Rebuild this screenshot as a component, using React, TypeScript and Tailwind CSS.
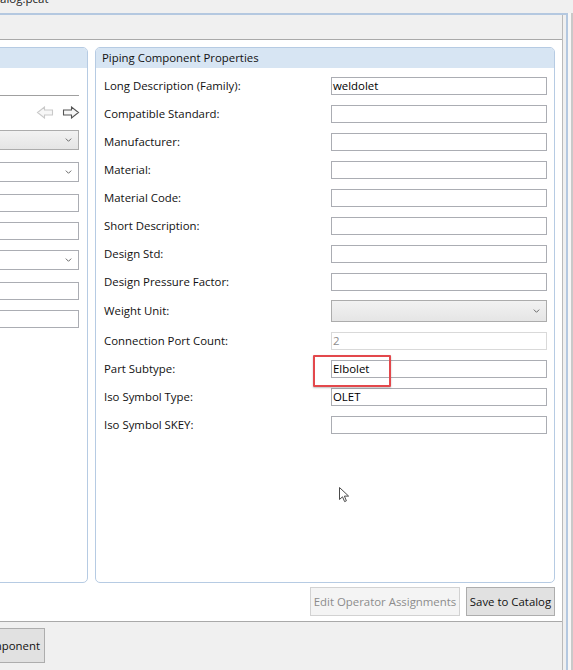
import React from 'react';

const rows: { label: string; kind: 'text' | 'select' | 'disabled'; value?: string; h: string }[] = [
  { label: 'Long Description (Family):', kind: 'text', value: 'weldolet', h: 'h-[28px]' },
  { label: 'Compatible Standard:', kind: 'text', h: 'h-[28px]' },
  { label: 'Manufacturer:', kind: 'text', h: 'h-[28px]' },
  { label: 'Material:', kind: 'text', h: 'h-[28px]' },
  { label: 'Material Code:', kind: 'text', h: 'h-[28px]' },
  { label: 'Short Description:', kind: 'text', h: 'h-[28px]' },
  { label: 'Design Std:', kind: 'text', h: 'h-[28px]' },
  { label: 'Design Pressure Factor:', kind: 'text', h: 'h-[28px]' },
  { label: 'Weight Unit:', kind: 'select', h: 'h-[30px]' },
  { label: 'Connection Port Count:', kind: 'disabled', value: '2', h: 'h-[29px]' },
  { label: 'Part Subtype:', kind: 'text', value: 'Elbolet', h: 'h-[28px]' },
  { label: 'Iso Symbol Type:', kind: 'text', value: 'OLET', h: 'h-[28px]' },
  { label: 'Iso Symbol SKEY:', kind: 'text', h: 'h-[28px]' },
];

function Chevron() {
  return (
    <svg width="7" height="4" viewBox="0 0 7 4" className="shrink-0">
      <path d="M0.8 0.6 L3.5 3.3 L6.2 0.6" fill="none" stroke="#6a6a6a" strokeWidth="1" />
    </svg>
  );
}

function BlockArrow({ dir, color }: { dir: 'left' | 'right'; color: string }) {
  return (
    <svg width="18" height="13" viewBox="0 0 18 13" className={dir === 'left' ? '-scale-x-100' : ''}>
      <path d="M1.5 4 H9.5 V1 L16.5 6.5 L9.5 12 V9 H1.5 Z" fill="#f7f7f7" stroke={color} strokeWidth="1.1" strokeLinejoin="miter" />
    </svg>
  );
}

function Field({ kind, value }: { kind: 'text' | 'select' | 'disabled'; value?: string }) {
  if (kind === 'select') {
    return (
      <div className="w-[216px] h-[22px] border border-[#acacac] bg-gradient-to-b from-[#f2f2f2] to-[#e5e5e5] flex items-center justify-end pr-[6px]">
        <Chevron />
      </div>
    );
  }
  if (kind === 'disabled') {
    return (
      <div className="w-[216px] h-[18px] border border-[#d9d9d9] bg-white flex items-center pl-[1px] text-[#8d8d8d]">
        {value}
      </div>
    );
  }
  return (
    <div className="w-[216px] h-[18px] border border-[#abadb3] bg-white flex items-center pl-[1px] text-[#000]">
      {value}
    </div>
  );
}

export default function App() {
  return (
    <div className="relative w-[573px] h-[670px] overflow-hidden bg-[#f0f0f0] text-[11.4px] leading-none text-[#111] font-['Segoe_UI','Open_Sans',sans-serif]">
      {/* window title, scrolled off the top */}
      <div className="h-[13px] overflow-hidden">
        <div className="-mt-[7px] text-[11.5px] leading-[12px] text-[#222]">alog.pcat</div>
      </div>

      <div className="flex h-[657px]">
        <div className="w-[568px] border-t-2 border-r-2 border-[#b4c8e0] flex">
          <div className="w-[563px] border-r border-[#bababa] flex flex-col">
            <div className="h-[25px] shrink-0 border-b border-[#a9a9a9] bg-[#f0f0f0]" />

            {/* main white area */}
            <div className="h-[582px] shrink-0 bg-white border-b border-[#a9a9a9] pt-[7px] flex flex-col">
              <div className="flex gap-[7px] h-[536px]">
                {/* left panel (cut off) */}
                <div className="-ml-[12px] w-[100px] border border-[#b6cbe3] rounded-[5px] overflow-hidden flex flex-col">
                  <div className="h-[20px] bg-[#d7e5f3] shrink-0" />
                  <div className="px-[8px] flex flex-col">
                    <div className="mt-[27px] h-px bg-[#a0a0a0]" />
                    <div className="mt-[10px] h-[13px] flex justify-end gap-[8px] -mr-[1px]">
                      <BlockArrow dir="left" color="#c9c9c9" />
                      <BlockArrow dir="right" color="#555555" />
                    </div>
                    <div className="mt-[11px] h-[20px] border border-[#acacac] bg-gradient-to-b from-[#f2f2f2] to-[#e5e5e5] flex items-center justify-end pr-[6px]">
                      <Chevron />
                    </div>
                    <div className="mt-[12px] h-[20px] border border-[#abadb3] bg-white flex items-center justify-end pr-[6px]">
                      <Chevron />
                    </div>
                    <div className="mt-[12px] h-[18px] border border-[#abadb3] bg-white" />
                    <div className="mt-[10px] h-[18px] border border-[#abadb3] bg-white" />
                    <div className="mt-[10px] h-[20px] border border-[#abadb3] bg-white flex items-center justify-end pr-[6px]">
                      <Chevron />
                    </div>
                    <div className="mt-[12px] h-[18px] border border-[#abadb3] bg-white" />
                    <div className="mt-[10px] h-[18px] border border-[#abadb3] bg-white" />
                  </div>
                </div>

                {/* right panel */}
                <div className="w-[460px] border border-[#b6cbe3] rounded-[5px] overflow-hidden flex flex-col">
                  <div className="h-[20px] bg-[#d7e5f3] shrink-0 flex items-center px-[6px] text-[#111]">
                    Piping Component Properties
                  </div>
                  <div className="pt-[4px] pl-[8px] pr-[7px] flex flex-col">
                    {rows.map(r => (
                      <div key={r.label} className={`${r.h} flex items-center justify-between`}>
                        <span>{r.label}</span>
                        <Field kind={r.kind} value={r.value} />
                      </div>
                    ))}
                  </div>
                </div>
              </div>

              <div className="mt-[4px] flex justify-end gap-[6px] pr-[7px]">
                <div className="w-[150px] h-[29px] border border-[#d2d2d2] bg-[#f4f4f4] text-[#8c8c8c] flex items-center justify-center">
                  Edit Operator Assignments
                </div>
                <div className="w-[89px] h-[29px] border border-[#adadad] bg-[#e1e1e1] text-[#111] flex items-center justify-center">
                  Save to Catalog
                </div>
              </div>
            </div>

            {/* bottom bar */}
            <div className="flex-1 bg-[#f0f0f0] pt-[6px]">
              <div className="-ml-[30px] w-[75px] h-[35px] border border-[#adadad] bg-[#e1e1e1] flex items-center justify-end pr-[4px] text-[#111]">
                Component
              </div>
            </div>
          </div>
        </div>
        <div className="w-[3px] bg-[#f7f7f7]" />
        <div className="w-[2px] bg-[#c9c9c9]" />
      </div>

      {/* red highlight box */}
      <div className="absolute left-[313px] top-[355px] w-[78px] h-[32px] border-2 border-[#e3484c] rounded-[1px] shadow-[0_1px_2px_rgba(0,0,0,0.25)]" />

      {/* mouse cursor */}
      <svg className="absolute left-[339px] top-[487px]" width="11" height="16" viewBox="0 0 11 16">
        <path d="M0.5 0.5 V12.5 L3.5 9.8 L5.6 14.6 L7.4 13.8 L5.4 9.1 H9.6 Z" fill="#ffffff" stroke="#4a4a4a" strokeWidth="1" strokeLinejoin="round" />
      </svg>
    </div>
  );
}
